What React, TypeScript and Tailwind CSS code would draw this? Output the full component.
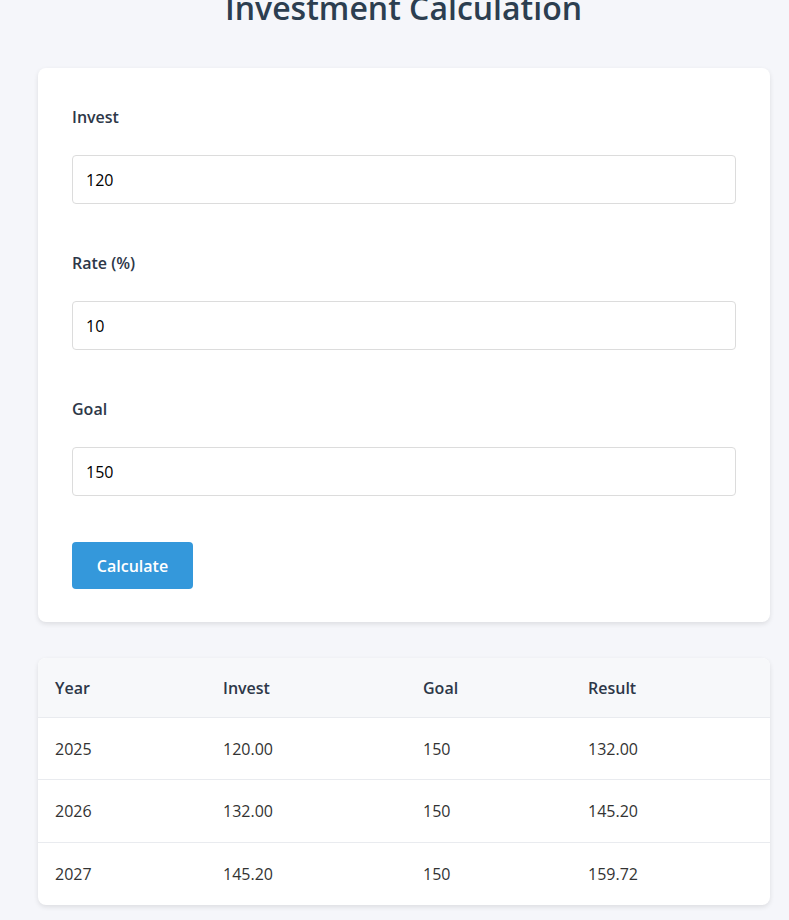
export default function App() {
  const rows = [
    ["2025", "120.00", "150", "132.00"],
    ["2026", "132.00", "150", "145.20"],
    ["2027", "145.20", "150", "159.72"],
  ];
  const fields = [
    ["Invest", "120"],
    ["Rate (%)", "10"],
    ["Goal", "150"],
  ];
  const heights = ["h-[62px]", "h-[63px]", "h-[62px]"];
  return (
    <div className="min-h-[920px] bg-[#f5f6fa] overflow-hidden" style={{ fontFamily: '"Open Sans", "Noto Sans", sans-serif' }}>
      <h1 className="mt-[-12px] text-center text-[32px] leading-[40px] font-semibold text-[#2c3e50] pl-[18px]">Investment Calculation</h1>
      <div className="ml-[38px] w-[732px] mt-[40px] bg-white rounded-lg shadow-[0_2px_5px_rgba(0,0,0,0.1)] px-[34px] pt-[35px] pb-[33px]">
        {fields.map(([label, val], i) => (
          <div key={label} className={i > 0 ? "mt-[45px]" : ""}>
            <div className="text-[16px] leading-[28px] font-semibold text-[#2d3748]">{label}</div>
            <div className="mt-[24px] h-[49px] border border-[#dcdcdc] rounded-[4px] flex items-center pl-[13px] text-[16px] text-black">{val}</div>
          </div>
        ))}
        <button className="mt-[46px] w-[121px] h-[47px] bg-[#3498db] rounded-[4px] text-white text-[16px] font-semibold">Calculate</button>
      </div>
      <div className="ml-[38px] w-[732px] mt-[36px] bg-white rounded-lg shadow-[0_2px_5px_rgba(0,0,0,0.1)] overflow-hidden">
        <div className="grid grid-cols-[168px_200px_165px_199px] h-[60px] items-center bg-[#f7f8fa] border-b border-[#e9ebef] text-[16px] font-semibold text-[#2d3748]">
          {["Year", "Invest", "Goal", "Result"].map((h) => (
            <div key={h} className="pl-[17px]">{h}</div>
          ))}
        </div>
        {rows.map((r, i) => (
          <div key={i} className={`grid grid-cols-[168px_200px_165px_199px] ${heights[i]} items-center text-[16px] text-[#333] ${i < rows.length - 1 ? "border-b border-[#e9ebef]" : ""}`}>
            {r.map((c, j) => (
              <div key={j} className="pl-[17px]">{c}</div>
            ))}
          </div>
        ))}
      </div>
    </div>
  );
}
